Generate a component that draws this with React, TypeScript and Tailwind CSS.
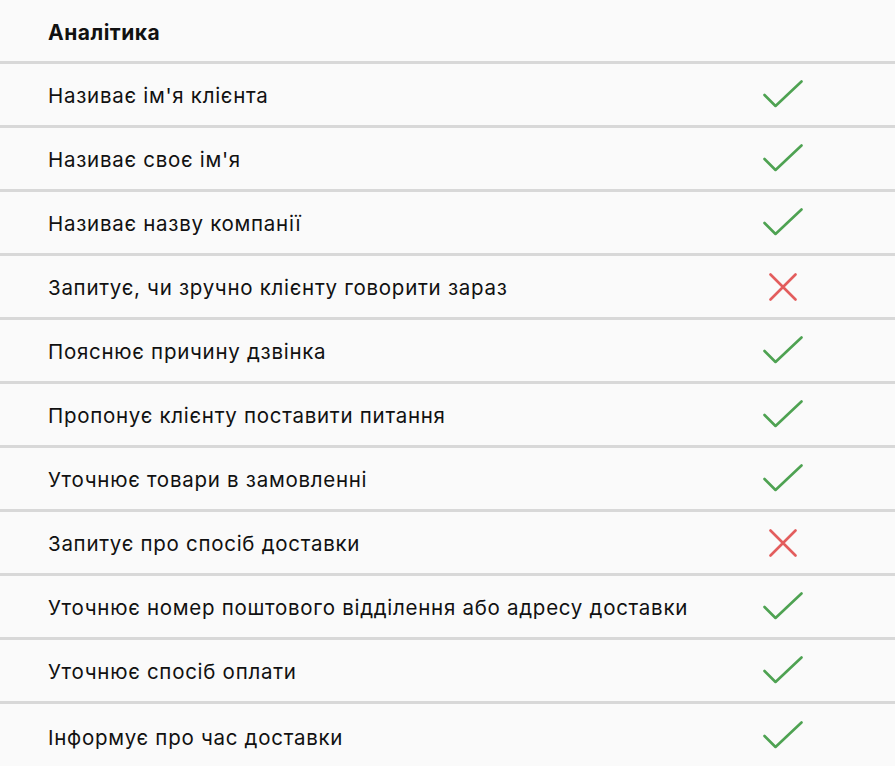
const items: { label: string; ok: boolean }[] = [
  { label: "Називає ім'я клієнта", ok: true },
  { label: "Називає своє ім'я", ok: true },
  { label: "Називає назву компанії", ok: true },
  { label: "Запитує, чи зручно клієнту говорити зараз", ok: false },
  { label: "Пояснює причину дзвінка", ok: true },
  { label: "Пропонує клієнту поставити питання", ok: true },
  { label: "Уточнює товари в замовленні", ok: true },
  { label: "Запитує про спосіб доставки", ok: false },
  { label: "Уточнює номер поштового відділення або адресу доставки", ok: true },
  { label: "Уточнює спосіб оплати", ok: true },
  { label: "Інформує про час доставки", ok: true },
];

function Check() {
  return (
    <svg width="40" height="30" viewBox="0 0 40 30" fill="none">
      <path
        d="M1.5 15 L12.5 26 L38.5 1.5"
        stroke="#4ea252"
        strokeWidth="2.6"
        strokeLinecap="round"
        strokeLinejoin="round"
      />
    </svg>
  );
}

function Cross() {
  return (
    <svg width="28" height="28" viewBox="0 0 28 28" fill="none">
      <path
        d="M1.5 1.5 L26.5 26.5 M26.5 1.5 L1.5 26.5"
        stroke="#e35d5d"
        strokeWidth="2.6"
        strokeLinecap="round"
      />
    </svg>
  );
}

export default function App() {
  return (
    <div className="min-h-screen bg-white font-['Inter',sans-serif] text-[#111]">
      <div className="bg-[#fafafa]">
        <div className="flex h-[64px] items-center border-b-[3px] border-[#d8d8d8] pl-[48px] pt-[4px]">
          <span className="text-[21px] font-bold tracking-[0.5px]">Аналітика</span>
        </div>
        {items.map((it, i) => (
          <div
            key={it.label}
            className={
              "flex h-[64px] items-center pl-[48px] " +
              (i < items.length - 1 ? "border-b-[3px] border-[#d8d8d8]" : "")
            }
          >
            <span className="flex-1 pt-[4px] text-[20.5px] tracking-[0.72px]">{it.label}</span>
            <div className="mr-[92px] flex w-[40px] justify-center">
              {it.ok ? <Check /> : <Cross />}
            </div>
          </div>
        ))}
      </div>
    </div>
  );
}
